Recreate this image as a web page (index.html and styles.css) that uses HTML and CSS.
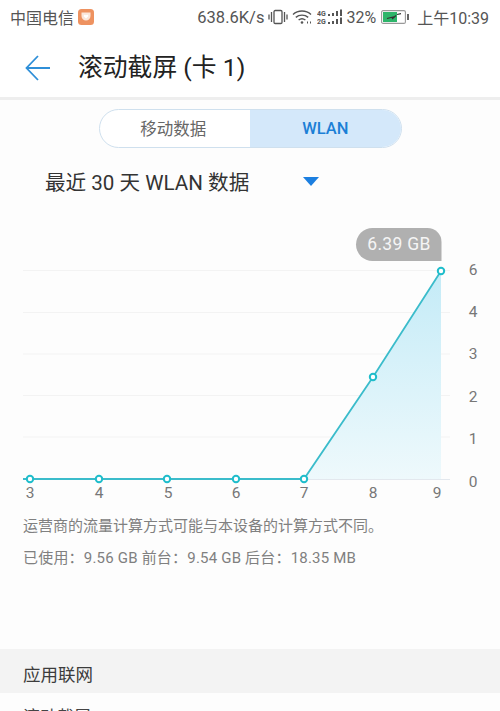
FILE: index.html
```html
<!DOCTYPE html>
<html lang="zh">
<head>
<meta charset="utf-8">
<title>滚动截屏</title>
<link rel="stylesheet" href="styles.css">
</head>
<body>
<div class="page">
  <div class="status">
    <div class="status-left">
      <span>中国电信</span>
      <svg class="app-badge" width="16" height="16" viewBox="0 0 16 16"><rect width="16" height="16" rx="3.5" fill="#ee9260"/><path d="M3.5 3.5h9v3.6a4.5 4.5 0 0 1-9 0z" fill="#fbe6da"/><path d="M8 9.5 5.7 7.2a1.3 1.3 0 0 1 2.3-1 1.3 1.3 0 0 1 2.3 1z" fill="#fff"/></svg>
    </div>
    <div class="status-right">
      <span class="speed">638.6K/s</span>
      <svg class="vib" width="20" height="16" viewBox="0 0 20 16" fill="none" stroke="#555" stroke-width="1.3"><rect x="6" y="1.5" width="8" height="13" rx="1.2"/><path d="M3.5 3v10M1 5.5v5M16.5 3v10M19 5.5v5"/></svg>
      <svg class="wifi" width="20" height="16" viewBox="0 0 20 16" fill="none" stroke="#555" stroke-width="1.4"><path d="M1 5.5c5-4.6 13-4.6 18 0M3.8 8.4c3.5-3 8.9-3 12.4 0M6.6 11c1.900-1.500 4.900-1.500 6.800 0"/><circle cx="10" cy="13.500" r="1.300" fill="#555" stroke="none"/><path d="M15 13.500h1M18 13.500h1" stroke-width="2"/></svg>
      <svg class="signal" width="27" height="16" viewBox="0 0 27 16" fill="#555"><text x="0" y="7" class="net">4G</text><text x="0" y="15" class="net">2G</text><rect x="11" y="5" width="2" height="2"/><rect x="15" y="4" width="2" height="3"/><rect x="19" y="2" width="2" height="5"/><rect x="23" y="0.500" width="2" height="6.500"/><rect x="11" y="13" width="2" height="2"/><rect x="15" y="12" width="2" height="3"/><rect x="19" y="10" width="2" height="5"/><rect x="23" y="8.500" width="2" height="6.500"/></svg>
      <span class="pct">32%</span>
      <svg class="batt" width="28" height="14" viewBox="0 0 28 14"><rect x="0.600" y="0.600" width="23.800" height="12.800" rx="1.500" fill="#fff" stroke="#999" stroke-width="1.100"/><rect x="2" y="2" width="14" height="10" fill="#2db56a"/><path d="M6 8.500 14 6.500l-3 2.500 4-3.500M16 4.500l4-.8" fill="none" stroke="#333" stroke-width="1.200"/><rect x="26" y="4" width="2" height="6" fill="#666"/></svg>
      <span>上午10:39</span>
    </div>
  </div>

  <header class="title-bar">
    <svg class="back" width="26" height="26" viewBox="0 0 26 26" fill="none" stroke="#2f8fd8" stroke-width="1.800"><path d="M25 13H1.500M13 1 1.500 13 13 25"/></svg>
    <h1 class="title">滚动截屏 (卡 1)</h1>
  </header>

  <div class="segmented">
    <div class="seg seg-off">移动数据</div>
    <div class="seg seg-on">WLAN</div>
  </div>

  <div class="range">
    <span>最近 30 天 WLAN 数据</span>
    <span class="caret"></span>
  </div>

  <svg class="chart" width="500" height="290" viewBox="0 218 500 290">
    <defs>
      <linearGradient id="fade" x1="0" y1="0" x2="0" y2="1">
        <stop offset="0" stop-color="#c4ebf7"/>
        <stop offset="1" stop-color="#eef9fc"/>
      </linearGradient>
    </defs>
    <g stroke="#f3f3f3" stroke-width="1">
      <path d="M23 270.500H450M23 312.500H450M23 354H450M23 395.500H450M23 437H450"/>
    </g>
    <path d="M23 479.500H450" stroke="#e3e8ee"/>
    <path d="M304 479 373 377 441 271V479Z" fill="url(#fade)"/>
    <path d="M23 479H304L373 377 441 271" fill="none" stroke="#3bbccb" stroke-width="1.800"/>
    <g fill="#fff" stroke="#1fbdcb" stroke-width="2">
      <circle cx="30" cy="479" r="3.200"/>
      <circle cx="99" cy="479" r="3.200"/>
      <circle cx="167" cy="479" r="3.200"/>
      <circle cx="236" cy="479" r="3.200"/>
      <circle cx="304" cy="479" r="3.200"/>
      <circle cx="373" cy="377" r="3.200"/>
      <circle cx="441" cy="271" r="3.200"/>
    </g>
    <path d="M372.500 228H427.500A14 14 0 0 1 441.500 242V261H372.500A16.500 16.500 0 0 1 372.500 228Z" fill="#b0b0b0"/>
    <text x="399" y="250" class="pill-text" text-anchor="middle">6.39 GB</text>
    <g class="axis" text-anchor="middle">
      <text x="30" y="498">3</text>
      <text x="99" y="498">4</text>
      <text x="168" y="498">5</text>
      <text x="236" y="498">6</text>
      <text x="304" y="498">7</text>
      <text x="373" y="498">8</text>
      <text x="437" y="498">9</text>
      <text x="473" y="275">6</text>
      <text x="473" y="317">4</text>
      <text x="473" y="359">3</text>
      <text x="473" y="402">2</text>
      <text x="473" y="444">1</text>
      <text x="473" y="487">0</text>
    </g>
  </svg>

  <div class="notes">
    <p class="note">运营商的流量计算方式可能与本设备的计算方式不同。</p>
    <p class="note note-usage">已使用：9.56 GB 前台：9.54 GB 后台：18.35 MB</p>
  </div>

  <div class="section">应用联网</div>
  <div class="row">滚动截屏</div>
</div>
</body>
</html>
```

FILE: styles.css
```css
* { box-sizing: border-box; }
html, body { margin: 0; padding: 0; }
body {
  width: 500px;
  height: 711px;
  overflow: hidden;
  background: #fdfdfd;
  font-family: Roboto, "Noto Sans CJK SC", sans-serif;
  color: #222;
}
.page { display: flex; flex-direction: column; height: 711px; overflow: hidden; }

.status {
  height: 34px;
  flex: none;
  padding: 0 11px 0 10px;
  display: flex;
  align-items: center;
  justify-content: space-between;
  font-size: 16px;
  color: #555;
  background: #fff;
}
.status-left, .status-right { display: flex; align-items: center; }
.app-badge { margin-left: 4px; }
.speed { margin-right: 4px; font-size: 16.500px; }
.wifi { margin-left: 4px; margin-right: 3px; }
.signal { margin-left: 2px; }
.net { font-size: 7px; font-weight: 700; font-family: Roboto, sans-serif; }
.pct { margin-left: 2px; margin-right: 5px; }
.batt { margin-right: 8px; }

.title-bar {
  height: 66px;
  flex: none;
  display: flex;
  align-items: center;
  padding: 4px 0 0 25px;
  background: #fff;
  border-bottom: 3px solid #eeeeee;
}
.back { flex: none; }
.title {
  margin: 0 0 0 27px;
  font-size: 24.800px;
  line-height: 34px;
  font-weight: 400;
  color: #222;
}

.segmented {
  flex: none;
  display: flex;
  width: 303px;
  height: 39px;
  margin: 9px 0 0 98.500px;
  border: 1px solid #cfe0ee;
  border-radius: 20px;
  overflow: hidden;
  background: #fff;
}
.seg {
  flex: none;
  width: 50%;
  display: flex;
  align-items: center;
  justify-content: center;
  font-size: 16.500px;
  color: #666;
  padding-bottom: 1px;
}
.seg-off { padding-right: 3px; }
.seg-on {
  background: #d4e8fa;
  color: #1c7fd6;
  font-weight: 500;
}

.range {
  flex: none;
  height: 36px;
  margin-top: 15px;
  padding-left: 45px;
  display: flex;
  align-items: center;
  font-size: 20.600px;
  color: #333;
}
.caret {
  width: 0;
  height: 0;
  margin-left: 54px;
  border-left: 8px solid transparent;
  border-right: 8px solid transparent;
  border-top: 9px solid #1c7fe0;
}

.chart { display: block; flex: none; margin-top: 19px; }
.pill-text { font-size: 17.500px; fill: #f5f5f5; letter-spacing: 0.300px; }
.axis { font-size: 15.500px; fill: #777; }

.notes { flex: none; padding: 8px 0 0 23px; }
.note {
  margin: 0;
  height: 32px;
  line-height: 21px;
  font-size: 15px;
  color: #808080;
  white-space: nowrap;
}
.note-usage { height: 21px; letter-spacing: 0.200px; }

.section {
  flex: none;
  height: 44px;
  margin-top: 80px;
  padding: 5px 0 0 23px;
  display: flex;
  align-items: center;
  background: #f3f3f3;
  font-size: 17.500px;
  color: #3c3c3c;
}
.row {
  flex: none;
  padding: 12px 0 0 23px;
  font-size: 17px;
  line-height: 24px;
  color: #444;
}
```
